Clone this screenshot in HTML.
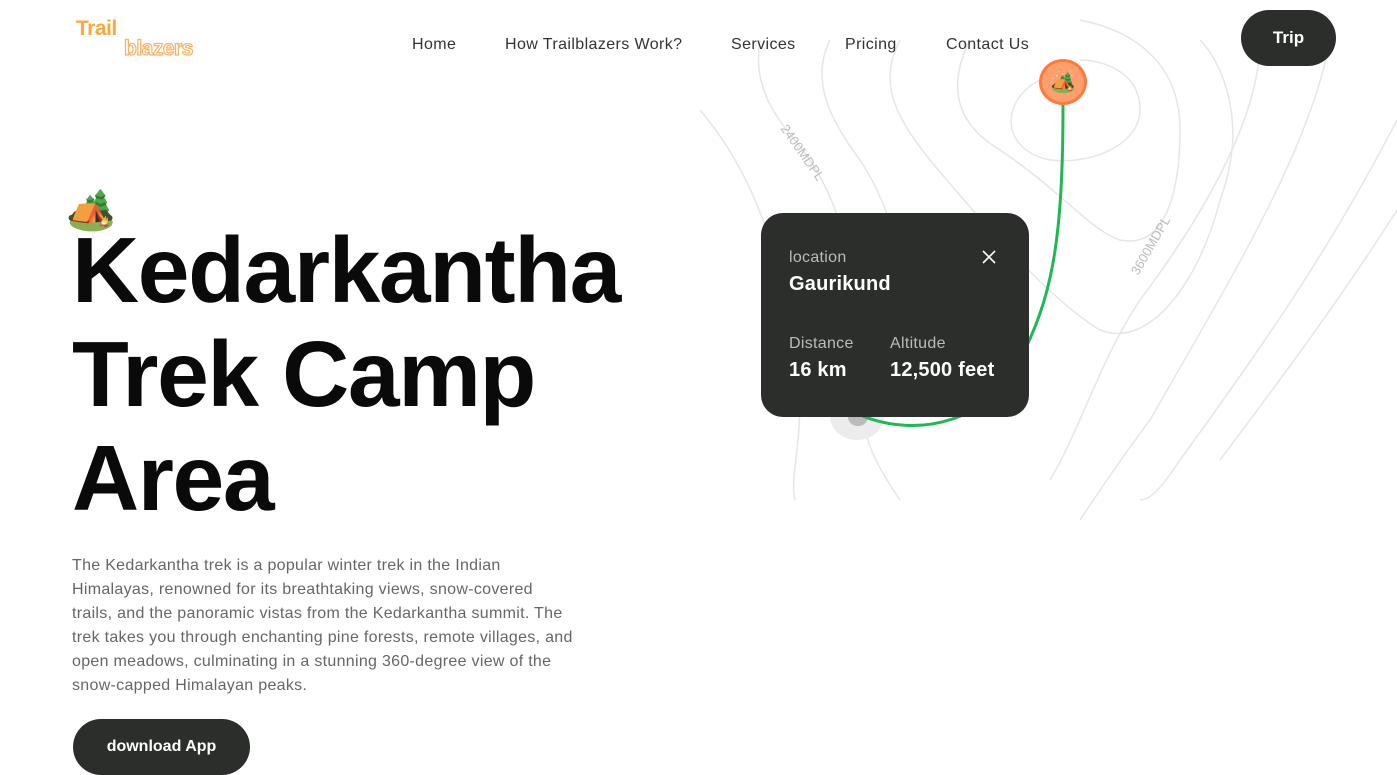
<!DOCTYPE html>
<html><head><meta charset="utf-8"><style>
*{margin:0;padding:0;box-sizing:border-box}
body{width:1397px;height:774px;overflow:hidden;background:#fff;font-family:"Liberation Sans",sans-serif;position:relative;color:#111}
.nav a{position:absolute;top:36px;font-size:16px;color:#333;text-decoration:none;letter-spacing:0.4px}
.logo1{position:absolute;left:76px;top:17px;font:bold 21px "Liberation Sans",sans-serif;color:#ffa63d;letter-spacing:-0.5px}
.logo2{position:absolute;left:124px;top:37px;font:bold 21px "Liberation Sans",sans-serif;color:#fff;-webkit-text-stroke:1.2px #ffb060;letter-spacing:-0.5px}
.trip{position:absolute;left:1241px;top:10px;width:95px;height:56px;border-radius:28px;background:#2b2e2a;color:#fff;font-weight:bold;font-size:17px;display:flex;align-items:center;justify-content:center}
h1{position:absolute;left:72px;top:218px;font-size:93px;line-height:104px;font-weight:bold;letter-spacing:-1.4px;color:#0a0a0a}
p{position:absolute;left:72px;top:554px;width:560px;white-space:nowrap;font-size:16px;line-height:24px;color:#666;letter-spacing:0.3px}
.dl{position:absolute;left:73px;top:719px;width:177px;height:56px;border-radius:28px;background:#2b2e2a;color:#fff;font-weight:bold;font-size:16px;display:flex;align-items:center;justify-content:center}
.card{position:absolute;left:761px;top:213px;width:268px;height:204px;border-radius:22px;background:#2b2e2a;color:#fff}
.card .l{position:absolute;font-size:16px;color:#bbb;letter-spacing:0.3px}
.card .v{position:absolute;font-size:20px;font-weight:bold;letter-spacing:0.2px}
</style></head><body>
<svg width="1397" height="774" style="position:absolute;left:0;top:0" fill="none" stroke="#e6e6e6" stroke-width="1.5">
<path d="M700 110 C760 180 790 280 800 400 C800 450 790 480 795 500"/>
<path d="M760 40 C750 100 790 130 810 160 C850 220 860 300 860 390 C860 440 880 470 900 500"/>
<path d="M830 40 C810 80 830 120 860 160 C900 220 910 300 920 360"/>
<path d="M900 40 C880 80 890 110 930 160 C980 220 1050 300 1100 330 C1150 350 1200 280 1220 200 C1250 120 1220 60 1200 40"/>
<path d="M970 40 C950 80 950 120 1000 150 C1060 190 1090 230 1120 240 C1170 250 1180 180 1180 130 C1180 60 1130 30 1080 20"/>
<path d="M1040 80 C1000 100 1000 150 1050 160 C1100 165 1140 140 1140 110 C1140 70 1100 60 1080 60"/>
<path d="M1260 40 C1260 120 1200 220 1140 300 C1100 360 1080 430 1050 480"/>
<path d="M1330 40 C1310 150 1230 280 1150 420 C1120 460 1100 490 1080 520"/>
<path d="M1397 120 C1330 250 1260 350 1180 460 C1160 490 1150 500 1140 500"/>
<path d="M1397 210 C1340 300 1280 380 1220 460"/>
</svg>
<div style="position:absolute;left:770px;top:145px;transform:rotate(55deg);font-size:13px;color:#bbb">2400MDPL</div>
<div style="position:absolute;left:1118px;top:238px;transform:rotate(-60deg);font-size:13px;color:#bbb">3600MDPL</div>
<div style="position:absolute;left:830px;top:392px;width:54px;height:48px;border-radius:50%;background:#ececec"></div>
<div style="position:absolute;left:848px;top:408px;width:20px;height:18px;border-radius:50%;background:#bbb"></div>
<svg width="1397" height="774" style="position:absolute;left:0;top:0" fill="none"><path d="M1063 105 C1063 250 1050 300 1020 360 C990 420 920 440 860 415" stroke="#1db954" stroke-width="3"/></svg>
<div style="position:absolute;left:1039px;top:59px;width:48px;height:46px;border-radius:50%;background:#ff9f6e;border:3px solid #ff7a3a;display:flex;align-items:center;justify-content:center;font-size:20px">🏕️</div>
<div class="logo1">Trail</div><div class="logo2">blazers</div>
<div class="nav"><a style="left:412px">Home</a><a style="left:505px">How Trailblazers Work?</a><a style="left:731px">Services</a><a style="left:845px">Pricing</a><a style="left:946px">Contact Us</a></div>
<div class="trip">Trip</div>
<div style="position:absolute;left:66px;top:186px;font-size:40px;line-height:48px">🏕️</div>
<h1>Kedarkantha<br>Trek Camp<br>Area</h1>
<p>The Kedarkantha trek is a popular winter trek in the Indian<br>Himalayas, renowned for its breathtaking views, snow-covered<br>trails, and the panoramic vistas from the Kedarkantha summit. The<br>trek takes you through enchanting pine forests, remote villages, and<br>open meadows, culminating in a stunning 360-degree view of the<br>snow-capped Himalayan peaks.</p>
<div class="dl">download App</div>
<div class="card">
<div class="l" style="left:28px;top:36px">location</div>
<div class="v" style="left:28px;top:60px">Gaurikund</div>
<svg style="position:absolute;left:221px;top:37px" width="14" height="14" stroke="#fff" stroke-width="1.6"><path d="M1 1L13 13M13 1L1 13"/></svg>
<div class="l" style="left:28px;top:122px">Distance</div>
<div class="v" style="left:28px;top:146px">16 km</div>
<div class="l" style="left:129px;top:122px">Altitude</div>
<div class="v" style="left:129px;top:146px">12,500 feet</div>
</div>
</body></html>
